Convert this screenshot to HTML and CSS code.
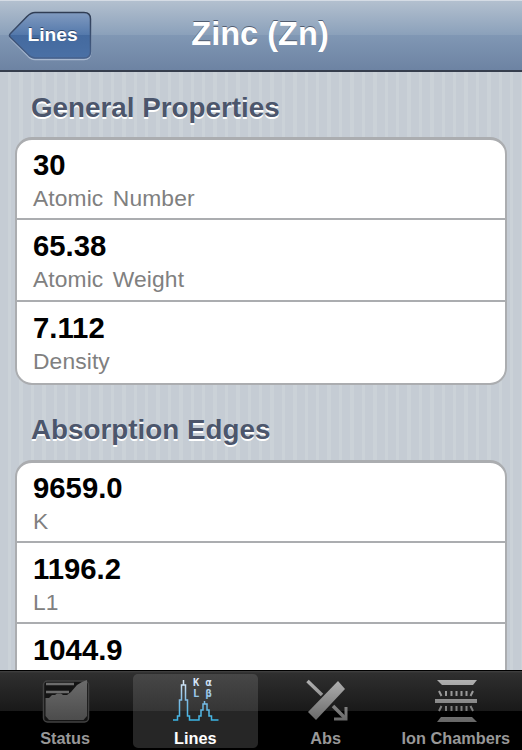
FILE: index.html
```html
<!DOCTYPE html>
<html lang="en">
<head>
	<meta charset="UTF-8">
	<meta name="viewport" content="width=device-width, initial-scale=1.0">
	<title>Zinc (Zn)</title>
	<link rel="stylesheet" href="styles.css">
</head>
<body>
	<header class="navbar">
		<button class="back">
			<svg class="back-shape" width="86" height="52" viewBox="0 0 86 52">
				<defs>
					<linearGradient id="back-fill" x1="0" y1="0" x2="0" y2="1">
						<stop offset="0" stop-color="#819bc0"/>
						<stop offset="0.5" stop-color="#5378ab"/>
						<stop offset="0.5" stop-color="#446a9f"/>
						<stop offset="1" stop-color="#4a70a5"/>
					</linearGradient>
					<linearGradient id="back-edge" x1="0" y1="0" x2="0" y2="1">
						<stop offset="0" stop-color="#303d54"/>
						<stop offset="1" stop-color="#46618c"/>
					</linearGradient>
				</defs>
				<path d="M27 4H76Q82.500 4 82.500 10.500V43Q82.500 49.500 76 49.500H27Q23 49.500 20 46L3 29Q1 27 3 25L19 8Q23 4 27 4Z" fill="none" stroke="#a9b9d0" stroke-width="1.500"/>
				<path d="M27 2.500H76Q82.500 2.500 82.500 9V41.500Q82.500 48 76 48H27Q23 48 20 44.500L2.500 27.500Q.500 25.500 2.500 23.500L19 6.500Q23 2.500 27 2.500Z" fill="url(#back-fill)" stroke="url(#back-edge)" stroke-width="1.500"/>
			</svg>
			<span class="back-label">Lines</span>
		</button>
		<h1>Zinc (Zn)</h1>
	</header>

	<main class="content">
		<h2>General Properties</h2>
		<ul class="group">
			<li><strong>30</strong><span>Atomic Number</span></li>
			<li><strong>65.38</strong><span>Atomic Weight</span></li>
			<li><strong>7.112</strong><span>Density</span></li>
		</ul>

		<h2>Absorption Edges</h2>
		<ul class="group">
			<li><strong>9659.0</strong><span>K</span></li>
			<li><strong>1196.2</strong><span>L1</span></li>
			<li><strong>1044.9</strong></li>
		</ul>
	</main>

	<nav class="tabbar">
		<a class="tab">
			<svg width="50" height="50" viewBox="0 0 50 50">
				<defs>
					<linearGradient id="gray" gradientUnits="userSpaceOnUse" x1="0" y1="4" x2="0" y2="48">
						<stop offset="0" stop-color="#b4b4b4"/>
						<stop offset="1" stop-color="#666"/>
					</linearGradient>
					<linearGradient id="panel" x1="0" y1="0" x2="0" y2="1">
						<stop offset="0" stop-color="#6c6c6c"/>
						<stop offset="1" stop-color="#4c4c4c"/>
					</linearGradient>
				</defs>
				<rect x="3.500" y="7" width="45" height="41" rx="4" fill="#141414" stroke="#424242" stroke-width="1.500"/>
				<path d="M6 10H34M6 18H29" stroke="#6c6c6c" stroke-width="2.500"/>
				<path d="M5.500 24H9L12 21H15L17 19.500H21L23 21H27L31 18L37 11L42 8L47 6V42L43.500 46H9L5.500 42Z" fill="url(#panel)"/>
			</svg>
			<span>Status</span>
		</a>
		<a class="tab active">
			<svg width="50" height="50" viewBox="0 0 50 50">
				<defs>
					<linearGradient id="blue" gradientUnits="userSpaceOnUse" x1="0" y1="4" x2="0" y2="48">
						<stop offset="0" stop-color="#e8f0fb"/>
						<stop offset="0.5" stop-color="#82bce5"/>
						<stop offset="1" stop-color="#35b4e4"/>
					</linearGradient>
				</defs>
				<path d="M3 46H7.500V42H9.500V26H11.500V11H13.500V6V11H15.500V26H17.500V42H19.500V46H29V42H31V36H33V30H34.500V27V30H37V36H39V42H41.500V46H48.500" fill="none" stroke="url(#blue)" stroke-width="1.500"/>
				<g class="glyphs" fill="url(#blue)">
					<text x="23" y="12">K</text>
					<text x="35.500" y="12">α</text>
					<text x="23" y="23">L</text>
					<text x="35.500" y="23">β</text>
				</g>
			</svg>
			<span>Lines</span>
		</a>
		<a class="tab">
			<svg width="50" height="50" viewBox="0 0 50 50">
				<path d="M6.500 7L21 21" stroke="url(#gray)" stroke-width="3.500"/>
				<path d="M32 32L44 44" stroke="url(#gray)" stroke-width="3.500"/>
				<path d="M45 33V45H33" fill="none" stroke="url(#gray)" stroke-width="3"/>
				<path d="M37 7L44 15L15 46L7 38Z" fill="url(#gray)"/>
			</svg>
			<span>Abs</span>
		</a>
		<a class="tab">
			<svg width="50" height="50" viewBox="0 0 50 50">
				<g fill="url(#gray)">
					<path d="M6 6H46L42 11H11Z"/>
					<path d="M4 25H46V29H4Z"/>
					<path d="M10 43H41L46 48H6Z"/>
				</g>
				<path d="M8 17L10.500 22M15 17V22M20.500 17V22M25.500 17V22M30.500 17V22M35.500 17V22M42 17L39.500 22M10.500 32L8 37M15 32V37M20.500 32V37M25.500 32V37M30.500 32V37M35.500 32V37M39.500 32L42 37" stroke="url(#gray)" stroke-width="2"/>
			</svg>
			<span>Ion Chambers</span>
		</a>
	</nav>
</body>
</html>
```

FILE: styles.css
```css
* {
	box-sizing: border-box;
}

body {
	margin: 0;
	height: 750px;
	display: flex;
	flex-direction: column;
	overflow: hidden;
	font-family: "Liberation Sans", Helvetica, Arial, sans-serif;
}

h1,
h2,
ul {
	margin: 0;
	padding: 0;
}

.navbar {
	flex: none;
	height: 72px;
	display: grid;
	grid-template-columns: 92px 1fr 94px;
	align-items: center;
	border-top: 1px solid #d5dce5;
	border-bottom: 2px solid #363e4d;
	background: linear-gradient(#b3c0cf 0%, #8aa0ba 50%, #8097b4 50%, #6d83a3 100%);
}

.navbar h1 {
	padding-bottom: 3px;
	text-align: center;
	white-space: nowrap;
	font-size: 32.6px;
	line-height: 40px;
	color: #fff;
	text-shadow: 0 -1.5px 0 #525e71;
}

.back {
	display: grid;
	align-items: center;
	height: 52px;
	padding: 0;
	border: none;
	background: none;
	font-family: inherit;
	margin-left: 8px;
}

.back-shape,
.back-label {
	grid-area: 1 / 1;
}

.back-label {
	padding: 0 0 1px 3px;
	font-size: 19.2px;
	font-weight: bold;
	color: #fff;
	text-shadow: 0 -1.5px 0 #304768;
}

.content {
	flex: 1;
	min-height: 0;
	overflow: hidden;
	padding: 0 15px;
	background: repeating-linear-gradient(90deg, #c5ccd4 0, #c5ccd4 8px, #cbd2d8 8px, #cbd2d8 11.41px);
}

h2 {
	height: 65px;
	padding: 17px 16px 0;
	font-size: 27.8px;
	line-height: 38px;
	color: #4c566c;
	text-shadow: 0 1.5px 0 #fff;
}

.group {
	list-style: none;
	background: #fff;
	border: 2px solid #abadb0;
	border-top-width: 3px;
	border-radius: 17px;
	overflow: hidden;
}

.group + h2 {
	height: 75px;
	padding-top: 26px;
}

.group li {
	height: 81.5px;
	padding: 9px 16px 0;
	border-bottom: 2px solid #abadb0;
}

.group li:first-child {
	height: 80px;
	padding-top: 8px;
}

.group li:last-child {
	height: 81px;
	border-bottom: none;
}

.group strong,
.group span {
	display: block;
}

.group strong {
	font-size: 29.3px;
	line-height: 34px;
	color: #000;
}

.group span {
	font-size: 22.8px;
	line-height: 32px;
	letter-spacing: 0.12px;
	word-spacing: 3px;
	color: #808080;
}

.tabbar {
	flex: none;
	height: 80px;
	display: grid;
	grid-template-columns: repeat(4, 1fr);
	padding: 3px 1px 3px 0;
	border-top: 1px solid #000;
	background: linear-gradient(#434343 0, #2f2f2f 2px, #191919 40px, #000 40px);
}

.tab {
	display: flex;
	flex-direction: column;
	align-items: center;
	margin: 0 3px;
	border-radius: 5px;
	font-size: 16.3px;
	font-weight: bold;
	line-height: 20px;
	white-space: nowrap;
	color: #989898;
}

.tab svg {
	flex: none;
	margin-bottom: 4px;
}

.tab.active {
	color: #fff;
	background: linear-gradient(#474747 0, #353535 37px, #262626 37px, #262626 100%);
}

.glyphs {
	font: bold 10.5px "DejaVu Sans Mono", monospace;
}
```
